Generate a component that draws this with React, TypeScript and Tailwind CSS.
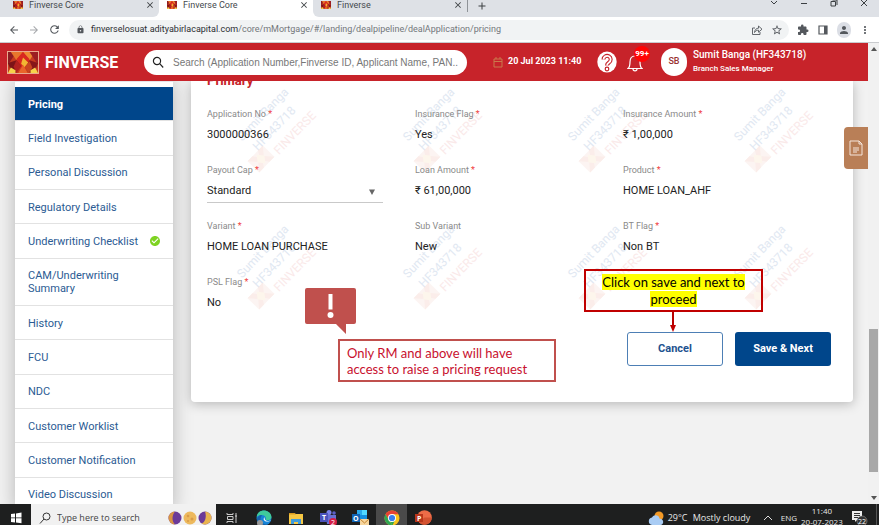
import React from "react";
import {
  MdArrowBack, MdArrowForward, MdRefresh, MdLock, MdStarBorder, MdExtension,
  MdPerson, MdMoreVert, MdClose, MdAdd, MdCheckCircle,
} from "react-icons/md";

const menu = [
  "Pricing", "Field Investigation", "Personal Discussion", "Regulatory Details",
  "Underwriting Checklist", "CAM/Underwriting Summary", "History", "FCU", "NDC",
  "Customer Worklist", "Customer Notification", "Video Discussion",
];

const fields = [
  { label: "Application No", value: "3000000366", required: true },
  { label: "Insurance Flag", value: "Yes", required: true },
  { label: "Insurance Amount", value: "₹ 1,00,000", required: true },
  { label: "Payout Cap", value: "Standard", required: true, select: true },
  { label: "Loan Amount", value: "₹ 61,00,000", required: true },
  { label: "Product", value: "HOME LOAN_AHF", required: true },
  { label: "Variant", value: "HOME LOAN PURCHASE", required: true },
  { label: "Sub Variant", value: "New", required: false },
  { label: "BT Flag", value: "Non BT", required: true },
  { label: "PSL Flag", value: "No", required: true },
];

function Brand({ className }: { className: string }) {
  return (
    <svg viewBox="0 0 32 23" preserveAspectRatio="none" className={className} aria-hidden="true">
      <rect width="32" height="23" fill="#c63a1f" />
      <path d="M0 0h9L0 14z" fill="#8e1b22" />
      <path d="M3 0h13L9 9z" fill="#e8762c" />
      <path d="M16 0h13l-6 9z" fill="#ee8a31" />
      <path d="M23 0h9v14z" fill="#9c1d22" />
      <path d="M9 8l7-8 7 8-7 15z" fill="#d9281f" />
      <path d="M16 6l6 6-4 5-4-4z" fill="#f2b632" />
      <path d="M0 12l9-3 5 6-6 8H4z" fill="#7c1418" />
      <path d="M32 12l-9-3-4 7 5 7h4z" fill="#861619" />
      <path d="M9 9l5 6-5 8-3-7z" fill="#b32220" />
      <path d="M23 10l3 7-4 6-4-7z" fill="#c9461f" />
      <path d="M0 23l3-6 5 3v3zM32 23l-3-6-5 3v3z" fill="#f6d24a" />
      <path d="M11 23l5-9 5 9z" fill="#e9652a" />
    </svg>
  );
}

function BrowserTab({ title, active = false, first = false }: { title: string; active?: boolean; first?: boolean }) {
  return (
    <div className={`flex w-[154px] shrink-0 items-start gap-1.5 pr-1 ${active ? "bg-white" : "bg-[#dee1e6]"} ${first ? "rounded-br-md" : ""} ${!active && !first ? "rounded-bl-md" : ""}`}>
      <Brand className="ml-2 mt-px h-2 w-2.5" />
      <span className="flex-1 text-[9px] leading-[10px] text-[#45494d]">{title}</span>
      <button type="button" aria-label={`Close ${title}`}><MdClose className="size-2.5 text-[#3c4043]" /></button>
    </div>
  );
}

function Watermark() {
  return (
    <svg viewBox="0 0 110 112" className="h-28 w-[110px] overflow-visible" aria-hidden="true">
      <g transform="rotate(-46)" fontFamily="Roboto, sans-serif">
        <text x="-36" y="50" fontSize="12" fill="#e1e8f2">Sumit Banga</text>
        <text x="-32" y="68" fontSize="12" fill="#e1e8f2">HF343718</text>
        <text x="-20" y="86" fontSize="12" fill="#fae9e9">FINVERSE</text>
      </g>
      <g transform="translate(30 78) rotate(-46)" opacity="0.5">
        <rect x="-11" y="-8" width="22" height="16" fill="#fbebe7" />
        <path d="M-11 8l7-8-7-8h7l4 6 4-6h7L4 0l7 8H4L0 2l-4 6z" fill="#f8ddd6" />
        <path d="M0-6l5 6-5 6-5-6z" fill="#fceedb" />
      </g>
    </svg>
  );
}

function BrowserChrome() {
  return (
    <div className="shrink-0">
      <div className="flex h-[17px] bg-white">
        <div className="w-[5px] shrink-0 bg-[#dee1e6]" />
        <BrowserTab title="Finverse Core" first />
        <BrowserTab title="Finverse Core" active />
        <BrowserTab title="Finverse" />
        <div className="flex flex-1 items-start bg-[#dee1e6]">
          <div className="h-3 w-px shrink-0 bg-[#8f9398]" />
          <button type="button" aria-label="New tab" className="ml-2"><MdAdd className="size-3 text-[#3c4043]" /></button>
          <div className="ml-auto flex items-start gap-5 pr-2.5 text-[#3c4043]">
            <button type="button" aria-label="Search tabs"><svg viewBox="0 0 10 8" className="h-2 w-2.5"><path d="M2 1l3 3 3-3" fill="none" stroke="currentColor" /></svg></button>
            <button type="button" aria-label="Minimize"><svg viewBox="0 0 10 8" className="h-2 w-2.5"><path d="M2 3.500h6" stroke="currentColor" /></svg></button>
            <button type="button" aria-label="Restore"><svg viewBox="0 0 10 8" className="h-2 w-2.5"><path d="M2 1.500h4.500v4.500h-4.500zM3.500 0h4.500v5" fill="none" stroke="currentColor" /></svg></button>
            <button type="button" aria-label="Close window"><svg viewBox="0 0 10 8" className="h-2 w-2.5"><path d="M2 0l6 6M8 0l-6 6" stroke="currentColor" /></svg></button>
          </div>
        </div>
      </div>
      <div className="flex h-[26px] items-center border-b border-[#c9cbce] bg-white pl-2 text-[#54585d]">
        <button type="button" aria-label="Back"><MdArrowBack className="size-3" /></button>
        <button type="button" aria-label="Forward" className="ml-2"><MdArrowForward className="size-3 text-[#a5a8ab]" /></button>
        <button type="button" aria-label="Reload" className="ml-2"><MdRefresh className="size-[13px]" /></button>
        <div className="ml-2 flex h-5 flex-1 items-center rounded-full bg-[#f1f3f4] pl-[7px] pr-1.5">
          <MdLock className="size-[9px]" />
          <span className="ml-1.5 flex-1 whitespace-nowrap text-[9px] text-[#73777b]">
            <span className="text-[#2c2f33]">finverselosuat.adityabirlacapital.com</span>/core/mMortgage/#/landing/dealpipeline/dealApplication/pricing
          </span>
          <button type="button" aria-label="Share">
            <svg viewBox="0 0 12 12" className="size-3" fill="none" stroke="currentColor" strokeWidth="0.9"><path d="M4 4H1.500v6.500h7.500V8M3.500 8.500c.3-3 2-4.300 4-4.300V2l3.500 3.200-3.500 3V6.200c-1.800 0-3 .6-4 2.300z" /></svg>
          </button>
          <button type="button" aria-label="Bookmark" className="ml-2"><MdStarBorder className="size-3" /></button>
        </div>
        <div className="ml-2 mr-2 flex items-center gap-2">
          <button type="button" aria-label="Extensions"><MdExtension className="size-3" /></button>
          <button type="button" aria-label="Side panel"><svg viewBox="0 0 12 12" className="size-3"><path d="M2 2h8v8H2z" fill="none" stroke="currentColor" strokeWidth="1.200" /><path d="M7 2h3v8H7z" fill="currentColor" /></svg></button>
          <button type="button" aria-label="Profile" className="grid h-4 w-3.5 place-items-center rounded-full bg-[#dbdee5]"><MdPerson className="size-3" /></button>
          <button type="button" aria-label="Menu"><MdMoreVert className="size-3" /></button>
        </div>
      </div>
    </div>
  );
}

function AppHeader() {
  return (
    <header className="flex h-[38px] shrink-0 items-center bg-[#c7232a] pl-[7px] text-white">
      <Brand className="h-[23px] w-8 border border-[#e9a98d]" />
      <span className="ml-1.5 w-[99px] pt-0.5 text-[16px] font-bold">FINVERSE</span>
      <div className="flex h-[25px] w-[323px] items-center overflow-hidden rounded-full bg-white pl-2">
        <svg viewBox="0 0 12 12" className="size-3 shrink-0" fill="none" stroke="#222" strokeWidth="1.200"><circle cx="5" cy="5" r="3.600" /><path d="M7.700 7.700L11.200 11.500" /></svg>
        <input
          type="text"
          aria-label="Search"
          placeholder="Search (Application Number,Finverse ID, Applicant Name, PAN.."
          className="ml-[9px] min-w-0 flex-1 bg-transparent font-['Liberation_Sans',sans-serif] text-[10px] text-gray-700 outline-none placeholder:text-[#777]"
        />
      </div>
      <svg viewBox="0 0 10 11" className="ml-[26px] h-[11px] w-2.5" fill="none" stroke="#c97a4c"><path d="M1 2h8v8H1zM1 4.500h8M3 0v2M7 0v2" /></svg>
      <time className="ml-[5px] w-[89px] whitespace-nowrap text-[9px] font-bold">20 Jul 2023 11:40</time>
      <button type="button" aria-label="Help">
        <svg viewBox="0 0 20 22" className="h-[22px] w-5"><ellipse cx="10" cy="11" rx="9.700" ry="10.500" fill="#fff" />
          <path d="M6.500 8.500a3.600 3.600 0 1 1 5.500 3c-1.500 1-2 1.400-2 3" fill="none" stroke="#c7232a" strokeWidth="4" />
          <path d="M6.500 8.500a3.600 3.600 0 1 1 5.500 3c-1.500 1-2 1.400-2 3" fill="none" stroke="#fff" strokeWidth="1.800" />
          <circle cx="10" cy="18" r="1.800" fill="#fff" stroke="#c7232a" strokeWidth="1.200" />
        </svg>
      </button>
      <button type="button" aria-label="Notifications" className="relative ml-2.5">
        <svg viewBox="0 0 16 20" className="h-5 w-4" fill="none" stroke="#fff" strokeWidth="1.200"><path d="M1 16.500h14c-2-1.500-2-3-2-6.500 0-4-1.500-6-5-6s-5 2-5 6c0 3.500 0 5-2 6.500zM6 17c0 2.500 4 2.500 4 0" /></svg>
        <span className="absolute -top-1.5 left-[7px] grid h-4 w-4 place-items-center rounded-full bg-[#ff0505] text-[8px] font-bold leading-none">99+</span>
      </button>
      <span className="ml-[18px] grid h-7 w-[26px] place-items-center rounded-full bg-white text-[9px] font-medium text-[#933]">SB</span>
      <div className="ml-1.5 whitespace-nowrap">
        <p className="text-[10px] font-medium leading-[14px]">Sumit Banga (HF343718)</p>
        <p className="text-[8px] font-medium leading-[14px]">Branch Sales Manager</p>
      </div>
    </header>
  );
}

function Sidebar() {
  return (
    <aside className="w-[173px] shrink-0 pl-[15px]">
      <nav className="flex h-[431px] flex-col border-t border-gray-200 bg-white pt-[5px] shadow-[0_0_18px_rgba(0,0,0,0.25)]">
        {menu.map((item) => (
          <a
            key={item}
            href="#"
            className={`flex min-h-[34px] flex-auto items-center justify-between border-b border-[#e2e2e2] pl-[13px] pr-3 pt-px text-[11px] leading-[13px] ${item === "Pricing" ? "bg-[#00468b] font-bold text-white" : "text-[#2b5b93]"} ${item.startsWith("CAM") ? "min-h-[47px] pr-12" : ""}`}
          >
            {item}
            {item === "Underwriting Checklist" && <MdCheckCircle className="size-3 text-[#7ed321]" />}
          </a>
        ))}
      </nav>
    </aside>
  );
}

function PricingCard() {
  return (
    <section className="relative ml-[18px] h-[321px] min-w-0 flex-1 rounded-b bg-white px-4 shadow-[0_2px_12px_rgba(0,0,0,0.25)]">
      <div className="pointer-events-none absolute inset-0 grid auto-rows-[137px] grid-cols-4 overflow-hidden">
        {Array.from({ length: 8 }, (_, i) => <div key={i} className="pl-10"><Watermark /></div>)}
      </div>
      <div className="relative">
        <h2 className="-mt-2 h-[34px] text-[13px] font-bold leading-4 text-[#c7232a]">Primary</h2>
        <div className="grid auto-rows-[56px] grid-cols-3 pr-1.5">
          {fields.map((f) => (
            <div key={f.label} className="pr-8">
              <label htmlFor={f.label} className="block text-[9px] leading-[14px] text-[#8a8a8a]">
                {f.label}{f.required && <span className="text-[#f04040]"> *</span>}
              </label>
              {f.select ? (
                <div className="relative">
                  <select id={f.label} className="mt-1 block h-[22px] w-full appearance-none border-b border-[#c9c9c9] bg-transparent text-[11px] text-[#222]">
                    <option>{f.value}</option>
                  </select>
                  <svg viewBox="0 0 6 6" className="pointer-events-none absolute right-2 top-2 size-1.5"><path d="M0 .5h6L3 6z" fill="#666" /></svg>
                </div>
              ) : (
                <output id={f.label} className="mt-1.5 block whitespace-nowrap text-[11px] leading-4 text-[#222]">{f.value}</output>
              )}
            </div>
          ))}
        </div>
        <div className="mt-px flex justify-end gap-3 pr-1.5 text-[11px] font-bold">
          <button type="button" className="h-[34px] w-24 rounded-[3px] border border-[#4d7fb5] bg-white text-[#1d528f]">Cancel</button>
          <button type="button" className="h-[34px] w-24 rounded-[3px] bg-[#00468b] text-white">Save &amp; Next</button>
        </div>
      </div>

      <svg viewBox="0 0 51 46" className="absolute left-[114px] top-[207px] h-[46px] w-[51px]" aria-hidden="true">
        <path d="M2 0h47q2 0 2 2v32q0 2-2 2H41v10L31 36H2q-2 0-2-2V2q0-2 2-2z" fill="#c0504d" />
        <path d="M23.500 6h4v15.500h-4z" fill="#fff" /><circle cx="25.500" cy="27" r="3" fill="#fff" />
      </svg>
      <p className="absolute left-[147px] top-[258px] h-[43px] w-[218px] whitespace-nowrap border-2 border-[#c0504d] bg-white px-[7px] pt-1 font-['Lato',sans-serif] text-[13px] leading-4 text-[#c8102e]">
        Only RM and above will have<br />access to raise a pricing request
      </p>
      <p className="absolute right-[90px] top-[188px] h-[43px] w-[179px] whitespace-nowrap border-2 border-[#c00000] pt-[3px] text-center font-['Lato',sans-serif] text-[13px] leading-[17px] text-black">
        <span className="bg-[#ffff00]">Click on save and next to </span><br /><span className="bg-[#ffff00]">proceed</span>
      </p>
      <svg viewBox="0 0 8 20" className="absolute right-[176px] top-[231px] h-5 w-2" aria-hidden="true"><path d="M4 0v14" stroke="#b80000" strokeWidth="2" /><path d="M1 13h6l-3 7z" fill="#c00000" /></svg>
    </section>
  );
}

function Moon({ variant }: { variant: number }) {
  return (
    <svg viewBox="0 0 14 14" className="size-3.5">
      <circle cx="7" cy="7" r="6.500" fill={variant === 1 ? "#edb95d" : "#6c3a98"} />
      {variant === 0 && <path d="M7 .5a6.500 6.500 0 0 0 0 13C3.500 10 4 4 7 .5z" fill="#d99342" />}
      {variant === 1 && <g fill="#d99b48"><circle cx="5" cy="5" r="1.300" /><circle cx="9" cy="8" r="1.500" /><circle cx="5" cy="10" r="1" /></g>}
      {variant === 2 && <path d="M7 .5a6.500 6.500 0 1 1-3.500 12C8 11 8.500 4 7 .5z" fill="#e9b44f" />}
    </svg>
  );
}

function Taskbar() {
  return (
    <footer className="h-[21px] shrink-0 overflow-hidden bg-[#1e1f1f] font-['Open_Sans',sans-serif] text-white">
      <div className="flex h-[27px] items-center">
        <button type="button" aria-label="Start" className="grid w-[31px] place-items-center"><svg viewBox="0 0 12 12" className="size-3"><path d="M1 2l4-.5v4H1zM6 1.400L11.500.6v4.900H6zM1 6.300h4v4.200L1 10zM6 6.300h5.500v5L6 10.600z" fill="#fff" /></svg></button>
        <label className="flex h-full w-[185px] items-center bg-[#f1f1f1] pl-2 pr-1">
          <svg viewBox="0 0 12 12" className="size-3 shrink-0" fill="none" stroke="#333"><circle cx="7.500" cy="4.500" r="3.500" /><path d="M5 7L1 11.500" /></svg>
          <input aria-label="Windows search" placeholder="Type here to search" className="ml-1.5 w-0 min-w-0 flex-1 bg-transparent text-[9px] outline-none placeholder:text-[#444]" />
          <span className="flex gap-px"><Moon variant={0} /><Moon variant={1} /><Moon variant={2} /></span>
        </label>
        <button type="button" aria-label="Task view" className="grid w-8 place-items-center"><svg viewBox="0 0 12 12" className="size-3" fill="none" stroke="#ccc"><path d="M1 1v1.500h6V1M1 11V9.500h6V11M1.500 4.500h5.500v3H1.500zM10 1v10M9 4h2" /></svg></button>
        <button type="button" aria-label="Edge" className="grid w-8 place-items-center">
          <svg viewBox="0 0 16 16" className="size-4"><circle cx="8" cy="8" r="7.500" fill="#1684d8" /><path d="M.7 7C1.500-2 15-1 15.500 7c0 3-4 4-6 2.500C11 7 8 4.500 5 5c-2 .2-3.500 1-4.300 2z" fill="#3fcb9b" /><path d="M5 7c-2 4 2 8 7 7-4 3-10 1-11-4 0-3 2-5 5-5z" fill="#1763aa" /><path d="M9 7c-1 2 0 4 4 4l2-1c-2 2-6 2-7 0-1-1 0-2 1-3z" fill="#fff" /><circle cx="4" cy="13" r="3" fill="#999" /></svg>
        </button>
        <button type="button" aria-label="File Explorer" className="grid w-8 place-items-center"><svg viewBox="0 0 16 16" className="size-4"><path d="M1 3h5l2 1h7v10H1z" fill="#f6c744" /><path d="M1 3h5l2 1.500H1z" fill="#d99a1e" /><path d="M3 9h10v5h-3v-2H6v2H3z" fill="#3e9bdd" /></svg></button>
        <button type="button" aria-label="Teams" className="grid w-8 place-items-center"><svg viewBox="0 0 17 16" className="h-4 w-[17px]"><circle cx="9" cy="2.500" r="2.500" fill="#7b83eb" /><circle cx="14" cy="3" r="1.800" fill="#5b60c8" /><path d="M6 5h10v6l-2 3H7z" fill="#6870d4" /><path d="M0 3h8v9H0z" fill="#4b53bc" /><text x="2" y="10" fontSize="7" fontWeight="700" fill="#fff">T</text><circle cx="13" cy="12" r="4" fill="#d51f46" /><text x="11" y="15" fontSize="7" fill="#fff">2</text></svg></button>
        <button type="button" aria-label="Outlook" className="grid w-8 place-items-center"><svg viewBox="0 0 17 16" className="h-4 w-[17px]"><path d="M5 0h10v12H5z" fill="#1490df" /><path d="M10 0h5v5h-5z" fill="#50d9ff" /><path d="M5 0h5v5H5z" fill="#28a8ea" /><path d="M0 4h8v8H0z" fill="#0f64b5" /><text x="1" y="11" fontSize="7" fontWeight="700" fill="#fff">O</text><path d="M8 9h9v6H8z" fill="#f6d59d" /><path d="M8 9l4.500 4L17 9" fill="none" stroke="#c6852f" /></svg></button>
        <button type="button" aria-label="Chrome" className="grid h-full w-[31px] place-items-center bg-[#4a4a4a]"><svg viewBox="0 0 16 16" className="size-4"><circle cx="8" cy="8" r="7.500" fill="#f9c51c" /><path d="M1.500 4.300A7.500 7.500 0 0 1 14.500 4.300H8L4.500 9.500z" fill="#e64234" /><path d="M1.500 4.300L5 10.500l3.500 5A7.500 7.500 0 0 1 1.500 4.300z" fill="#2fa653" /><path d="M5 10l3.500 5.500L11 10z" fill="#2fa653" /><circle cx="8" cy="8" r="4" fill="#fff" /><circle cx="8" cy="8" r="3.100" fill="#397fee" /></svg></button>
        <button type="button" aria-label="PowerPoint" className="grid w-8 place-items-center"><svg viewBox="0 0 17 16" className="h-4 w-[17px]"><circle cx="9.500" cy="7.500" r="7.300" fill="#ed6c47" /><path d="M9.500 7.500h7.300a7.300 7.300 0 0 1-13 4.500z" fill="#d35230" /><path d="M0 4h8v8H0z" fill="#b7361b" /><text x="2" y="11" fontSize="7" fontWeight="700" fill="#fff">P</text></svg></button>
        <div className="ml-auto flex h-full items-center whitespace-nowrap text-[9px] text-[#e6e6e6]">
          <svg viewBox="0 0 16 14" className="h-3.5 w-4"><circle cx="11" cy="5" r="4.500" fill="#f39a27" /><path d="M4 14a3.800 3.800 0 0 1 0-7.500C6 3 11 4 11.500 7.500c5 .5 4.500 6.500 1 6.500z" fill="#a9ccf4" /></svg>
          <span className="ml-1 w-[25px]">29°C</span>
          <span className="w-[70px]">Mostly cloudy</span>
          <svg viewBox="0 0 10 6" className="mr-2 h-1.5 w-2.5" fill="none" stroke="#ddd"><path d="M1 5l4-4 4 4" /></svg>
          <span className="text-[8px]">ENG</span>
          <span className="ml-1 grid w-[38px] justify-items-center self-start pt-px text-[8px] leading-[11px]"><span>11:40</span><span>20-07-2023</span></span>
          <svg viewBox="0 0 17 16" className="ml-3 mr-2 h-4 w-[17px]"><path d="M1 1h10v9H6l-2 2v-2H1z" fill="#eee" /><path d="M3 3.500h6M3 5.500h6M3 7.500h4" stroke="#333" /><circle cx="11" cy="11" r="5" fill="#333" stroke="#aaa" strokeWidth="0.500" /><text x="7" y="14" fontSize="7" fill="#fff">22</text></svg>
          <span className="mr-0.5 h-full w-px bg-[#555]" />
        </div>
      </div>
    </footer>
  );
}

export default function App() {
  return (
    <div className="flex h-screen flex-col overflow-hidden bg-[#f1f1f1] font-['Roboto',sans-serif]">
      <BrowserChrome />
      <div className="flex min-h-0 flex-1">
        <div className="flex min-w-0 flex-1 flex-col">
          <AppHeader />
          <main className="relative flex min-h-0 flex-1 overflow-hidden bg-[#f2f2f2] pr-[15px]">
            <Sidebar />
            <PricingCard />
            <button type="button" aria-label="Notes" className="absolute right-0 top-[46px] grid h-[42px] w-6 place-items-center rounded-l bg-[#b97f57]">
              <svg viewBox="0 0 14 16" className="h-4 w-3.5" fill="none" stroke="#f5e6dc"><path d="M1 1h9l3 3v11H1zM10 1v3h3M4 8h6M4 10h6M4 12h4" /></svg>
            </button>
          </main>
        </div>
        <div className="flex w-[11px] flex-col items-center justify-between bg-[#f1f1f1] py-1" aria-hidden="true">
          <svg viewBox="0 0 6 4" className="h-1 w-1.5"><path d="M0 4l3-4 3 4z" fill="#555" /></svg>
          <div className="mt-auto mb-6 h-[143px] w-[9px] bg-[#a8a8a8]" />
          <svg viewBox="0 0 6 4" className="h-1 w-1.5"><path d="M0 0l3 4 3-4z" fill="#555" /></svg>
        </div>
      </div>
      <Taskbar />
    </div>
  );
}
